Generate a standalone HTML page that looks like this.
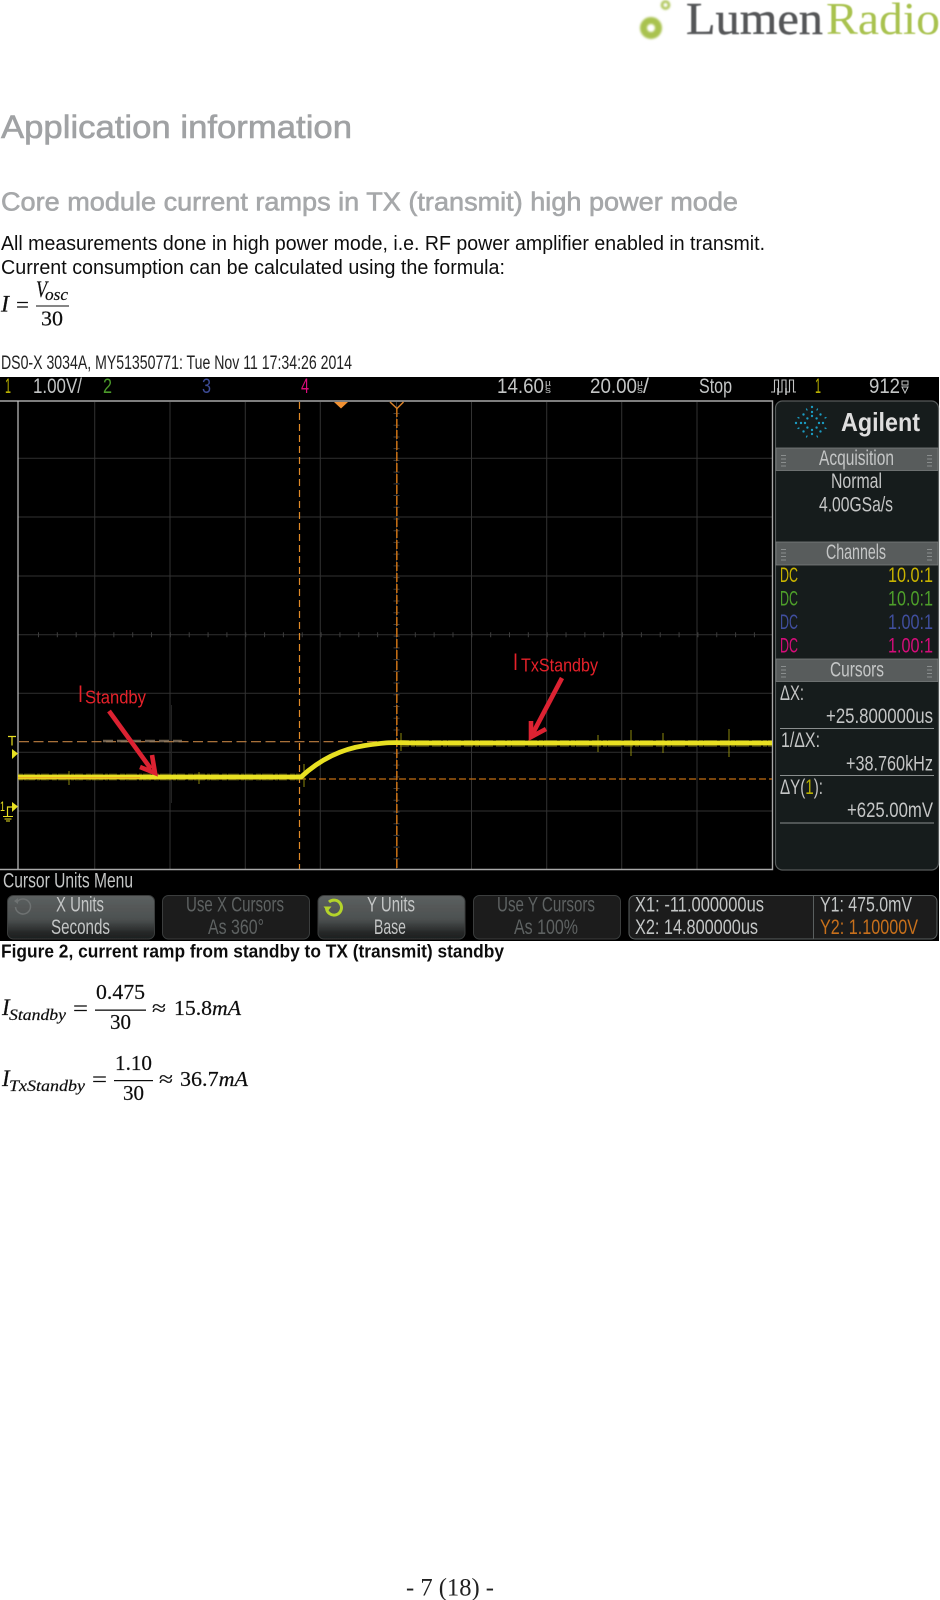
<!DOCTYPE html>
<html lang="en"><head><meta charset="utf-8"><title>Application information</title>
<style>
html,body{margin:0;padding:0;background:#fff;width:940px;height:1600px;overflow:hidden}
svg{display:block}
text{font-family:"Liberation Sans",sans-serif;white-space:pre}
.s{fill:#c4c6c6;font-size:21px}
.d{fill:#5e6262;font-size:21px}
.b{fill:#111;font-size:20px}
.m{font-family:"Liberation Serif",serif;fill:#111;font-size:21px;stroke:#111;stroke-width:.2}
.i{font-style:italic}
</style></head><body>
<svg width="940" height="1600" viewBox="0 0 940 1600" xmlns="http://www.w3.org/2000/svg">
<defs>
<linearGradient id="btn" x1="0" y1="0" x2="0" y2="1"><stop offset="0" stop-color="#5c6060"/><stop offset=".55" stop-color="#4c5050"/><stop offset=".85" stop-color="#262828"/><stop offset="1" stop-color="#1c1e1e"/></linearGradient>
<filter id="all" filterUnits="userSpaceOnUse" x="0" y="0" width="940" height="1600"><feGaussianBlur stdDeviation=".35"/></filter>
<filter id="soft" x="-20%" y="-20%" width="140%" height="140%"><feGaussianBlur stdDeviation=".5"/></filter>
<filter id="softer" x="-30%" y="-30%" width="160%" height="160%"><feGaussianBlur stdDeviation="1"/></filter>
</defs>
<g filter="url(#all)">

<!-- logo -->
<g filter="url(#softer)">
<circle cx="651" cy="28" r="7.500" fill="none" stroke="#a9c24f" stroke-width="7"/>
<circle cx="665.500" cy="5" r="3.500" fill="none" stroke="#a9c24f" stroke-width="2.500"/>
</g>
<g filter="url(#soft)">
<text x="686" y="34" style="font-family:'Liberation Serif',serif;font-size:45px;stroke:#555759;stroke-width:.4" fill="#555759" textLength="137" lengthAdjust="spacingAndGlyphs">Lumen</text>
<text x="826" y="34" style="font-family:'Liberation Serif',serif;font-size:45px" fill="#a9c24f" textLength="114" lengthAdjust="spacingAndGlyphs">Radio</text>
</g>

<!-- headings -->
<text x="1" y="138" style="font-size:32px;stroke:#a0a2a4;stroke-width:.6" fill="#a0a2a4" textLength="351" lengthAdjust="spacingAndGlyphs">Application information</text>
<text x="1" y="210.500" style="font-size:26px;stroke:#a6a8aa;stroke-width:.6" fill="#a6a8aa" textLength="737" lengthAdjust="spacingAndGlyphs">Core module current ramps in TX (transmit) high power mode</text>
<text x="1" y="250" class="b" textLength="764" lengthAdjust="spacingAndGlyphs">All measurements done in high power mode, i.e. RF power amplifier enabled in transmit.</text>
<text x="1" y="274" class="b" textLength="504" lengthAdjust="spacingAndGlyphs">Current consumption can be calculated using the formula:</text>

<!-- formula 1 -->
<text x="1" y="311.500" class="m i" style="font-size:23px" textLength="8" lengthAdjust="spacingAndGlyphs">I</text>
<text x="16" y="311.500" class="m" textLength="13" lengthAdjust="spacingAndGlyphs">=</text>
<text x="36" y="297" class="m i" style="font-size:23px" textLength="11" lengthAdjust="spacingAndGlyphs">V</text>
<text x="45" y="300" class="m i" style="font-size:17px" textLength="23" lengthAdjust="spacingAndGlyphs">osc</text>
<rect x="36" y="305.500" width="33" height="1" fill="#111"/>
<text x="41" y="325.500" class="m" textLength="22" lengthAdjust="spacingAndGlyphs">30</text>

<text x="1" y="369" style="font-size:19px" fill="#222" textLength="351" lengthAdjust="spacingAndGlyphs">DS0-X 3034A, MY51350771: Tue Nov 11 17:34:26 2014</text>

<!-- scope background -->
<rect x="0" y="377" width="939" height="564" fill="#000"/>

<!-- top bar -->
<text x="5" y="393" class="s" style="fill:#b8b000" textLength="6" lengthAdjust="spacingAndGlyphs">1</text>
<text x="33" y="393" class="s" textLength="49" lengthAdjust="spacingAndGlyphs">1.00V/</text>
<text x="103" y="393" class="s" style="fill:#4c9a2a" textLength="9" lengthAdjust="spacingAndGlyphs">2</text>
<text x="202" y="393" class="s" style="fill:#3c4c96" textLength="9" lengthAdjust="spacingAndGlyphs">3</text>
<text x="301" y="393" class="s" style="fill:#d8107a" textLength="8" lengthAdjust="spacingAndGlyphs">4</text>
<text x="497" y="393" class="s" textLength="47" lengthAdjust="spacingAndGlyphs">14.60</text>
<text x="545" y="386" class="s" style="font-size:9px" textLength="6" lengthAdjust="spacingAndGlyphs">µ</text>
<text x="545" y="393" class="s" style="font-size:9px" textLength="6" lengthAdjust="spacingAndGlyphs">s</text>
<text x="590" y="393" class="s" textLength="47" lengthAdjust="spacingAndGlyphs">20.00</text>
<text x="637" y="386" class="s" style="font-size:9px" textLength="6" lengthAdjust="spacingAndGlyphs">µ</text>
<text x="637" y="393" class="s" style="font-size:9px" textLength="6" lengthAdjust="spacingAndGlyphs">s</text>
<text x="643" y="393" class="s" textLength="6" lengthAdjust="spacingAndGlyphs">/</text>
<text x="699" y="393" class="s" textLength="33" lengthAdjust="spacingAndGlyphs">Stop</text>
<path d="M771 392h3.500v-12h4v12h3.500v-12h4v12h3.500v-12h4v12h2.500" fill="none" stroke="#c4c6c6" stroke-width="1.100"/>
<path d="M778 388v7M786 388v7" stroke="#c4c6c6" stroke-width="1.500"/>
<text x="815" y="393" class="s" style="fill:#b8b000" textLength="6" lengthAdjust="spacingAndGlyphs">1</text>
<text x="869" y="393" class="s" textLength="31" lengthAdjust="spacingAndGlyphs">912</text>
<path d="M902 387l3 6 3-6zM902 381h6v4h-6z" fill="none" stroke="#c4c6c6" stroke-width="1"/>

<!-- grid -->
<g stroke="#333" stroke-width="1">
<path d="M94.700 402V869M170 402V869M245.300 402V869M320.300 402V869M396.500 402V869M471.500 402V869M546.700 402V869M621.700 402V869M697 402V869"/>
<path d="M18 458.300H772M18 517H772M18 576H772M18 634.700H772M18 693.300H772M18 752.300H772M18 811H772"/>
</g>
<line x1="38" y1="634.700" x2="772" y2="634.700" stroke="#3c3c3c" stroke-width="5" stroke-dasharray="1 17.840"/>
<line x1="396.500" y1="413" x2="396.500" y2="869" stroke="#3c3c3c" stroke-width="6" stroke-dasharray="1 10.720"/>
<path d="M171.500 705V803" stroke="#222" stroke-width="1"/>

<!-- frame -->
<path d="M0 401H772.500V869.500H0" fill="none" stroke="#a8a8a8" stroke-width="1.400"/>
<path d="M18 401V869" stroke="#c4c4c4" stroke-width="1.200"/>

<!-- cursors -->
<g stroke="#c06c18" fill="none" stroke-width="1.200">
<line x1="299.500" y1="402" x2="299.500" y2="869" stroke="#e08a28" stroke-dasharray="7 4"/>
<line x1="396.800" y1="408" x2="396.800" y2="869" stroke-width="1.600" stroke-dasharray="9 2"/>
<line x1="19" y1="741.700" x2="772" y2="741.700" stroke="#c08040" stroke-dasharray="10 4.500"/>
<line x1="19" y1="779" x2="772" y2="779" stroke-dasharray="7 3"/>
</g>
<path d="M103 741H182" stroke="#8c7a64" stroke-width="2.500" stroke-dasharray="10 4" opacity=".8"/>
<path d="M334 402H348L341 408.500Z" fill="#f09030"/>
<path d="M390 402L397 408.500L403.500 402" fill="none" stroke="#d88028" stroke-width="1.500"/>

<!-- trace -->
<g stroke="#8c8810" stroke-width="1">
<path d="M69 771V785M199 772V784M304 764V787M401 733V751M598 735V752M631 730V756M663 733V753M729 729V757"/>
</g>
<path d="M18 777H300" stroke="#8c8a14" stroke-width="7" stroke-dasharray="5 1 11 2 3 1 8 3" opacity=".45"/>
<path d="M400 743.500H772" stroke="#8c8a14" stroke-width="7" stroke-dasharray="9 2 4 1 13 3" opacity=".45"/>
<path d="M18 777H301C315 764 335 750 365 745.500S395 743 420 743H772" fill="none" stroke="#e8e020" stroke-width="4.800"/>
<path d="M18 777.800H140" stroke="#f0a020" stroke-width="1"/>

<!-- annotations -->
<text x="78" y="702" style="font-size:24px" fill="#e6202a" textLength="5" lengthAdjust="spacingAndGlyphs">I</text>
<text x="85" y="703.500" style="font-size:18px" fill="#e6202a" textLength="61" lengthAdjust="spacingAndGlyphs">Standby</text>
<path d="M109 711L151 769" stroke="#dc2430" stroke-width="4.600" fill="none"/>
<path d="M152 755L155 773L140 767" fill="none" stroke="#dc2430" stroke-width="4.600"/>
<text x="513" y="670" style="font-size:24px" fill="#e6202a" textLength="5" lengthAdjust="spacingAndGlyphs">I</text>
<text x="521" y="671.500" style="font-size:18px" fill="#e6202a" textLength="77" lengthAdjust="spacingAndGlyphs">TxStandby</text>
<path d="M562 678L533 733" stroke="#dc2430" stroke-width="4.600" fill="none"/>
<path d="M531 721L531 737L546 729" fill="none" stroke="#dc2430" stroke-width="4.600"/>

<!-- trigger / ground markers -->
<path d="M8 736.500h8M12 736.500v9" stroke="#e8e020" stroke-width="1.200" fill="none"/>
<path d="M12 749L18 753.500L12 759Z" fill="#e8e020"/>
<text x="0" y="811" style="font-size:14px" fill="#e8e020" textLength="5" lengthAdjust="spacingAndGlyphs">1</text>
<path d="M7.500 816V807H13" stroke="#e8e020" stroke-width="1.200" fill="none"/>
<path d="M12 802L18 806.500L12 812Z" fill="#e8e020"/>
<path d="M3 816.500H13M4.500 819H11.500M6 821H10" stroke="#e8e020" stroke-width="1"/>

<!-- right panel -->
<rect x="775.500" y="401" width="163" height="469" rx="7" fill="#181a1a" stroke="#555a5a" stroke-width="1.200"/>
<g transform="translate(812 423)" stroke="#1a9cc2" stroke-linecap="round" fill="none">
<g stroke-width="2.400"><path d="M-16 0H16" stroke-dasharray="0 5 0 4 0 14 0 4 0 5"/><path d="M0 -16V16" stroke-dasharray="0 5 0 4 0 14 0 4 0 5"/><path d="M-8.500 -8.500L8.500 8.500" stroke-dasharray="0 5.500 0 13 0 5.500"/><path d="M8.500 -8.500L-8.500 8.500" stroke-dasharray="0 5.500 0 13 0 5.500"/></g>
<path d="M-14 -5.500L-13 -5M14 5.500L13 5M14 -5.500L13 -5M-14 5.500L-13 5M-5.500 -14L-5 -13M5.500 14L5 13M5.500 -14L5 -13M-5.500 14L-5 13" stroke-width="1.300"/>
</g>
<text x="841" y="431" style="font-size:26px;font-weight:bold" fill="#dedede" textLength="79" lengthAdjust="spacingAndGlyphs">Agilent</text>

<g fill="#585c5c" stroke="#7a7e7e" stroke-width=".8">
<rect x="776" y="448" width="162" height="22.500"/>
<rect x="776" y="542" width="162" height="23"/>
<rect x="776" y="659" width="162" height="22.500"/>
</g>
<g fill="none" stroke="#8a8e8e" stroke-dasharray="1 2.500">
<path d="M783.500 455V468M929.500 455V468M783.500 549V562M929.500 549V562M783.500 666V679M929.500 666V679" stroke-width="5"/>
</g>
<text x="819" y="465" class="s" textLength="75" lengthAdjust="spacingAndGlyphs">Acquisition</text>
<text x="831" y="488" class="s" textLength="51" lengthAdjust="spacingAndGlyphs">Normal</text>
<text x="819" y="511.500" class="s" textLength="74" lengthAdjust="spacingAndGlyphs">4.00GSa/s</text>
<text x="826" y="559" class="s" textLength="60" lengthAdjust="spacingAndGlyphs">Channels</text>
<text x="780" y="582" style="font-size:21px" fill="#c8b400" textLength="18" lengthAdjust="spacingAndGlyphs">DC</text>
<text x="888" y="582" style="font-size:21px" fill="#c8b400" textLength="45" lengthAdjust="spacingAndGlyphs">10.0:1</text>
<text x="780" y="605.500" style="font-size:21px" fill="#4ea02c" textLength="18" lengthAdjust="spacingAndGlyphs">DC</text>
<text x="888" y="605.500" style="font-size:21px" fill="#4ea02c" textLength="45" lengthAdjust="spacingAndGlyphs">10.0:1</text>
<text x="780" y="629" style="font-size:21px" fill="#3f4f9e" textLength="18" lengthAdjust="spacingAndGlyphs">DC</text>
<text x="888" y="629" style="font-size:21px" fill="#3f4f9e" textLength="45" lengthAdjust="spacingAndGlyphs">1.00:1</text>
<text x="780" y="652.500" style="font-size:21px" fill="#d4107a" textLength="18" lengthAdjust="spacingAndGlyphs">DC</text>
<text x="888" y="652.500" style="font-size:21px" fill="#d4107a" textLength="45" lengthAdjust="spacingAndGlyphs">1.00:1</text>
<text x="830" y="676.500" class="s" textLength="54" lengthAdjust="spacingAndGlyphs">Cursors</text>
<text x="780" y="700" class="s" textLength="24" lengthAdjust="spacingAndGlyphs">ΔX:</text>
<text x="826" y="723" class="s" textLength="107" lengthAdjust="spacingAndGlyphs">+25.800000us</text>
<rect x="780" y="728" width="154" height="1" fill="#8a8e8e"/>
<text x="781" y="747" class="s" textLength="39" lengthAdjust="spacingAndGlyphs">1/ΔX:</text>
<text x="846" y="770.500" class="s" textLength="87" lengthAdjust="spacingAndGlyphs">+38.760kHz</text>
<rect x="780" y="775" width="154" height="1" fill="#8a8e8e"/>
<text x="780" y="794" class="s" textLength="43" lengthAdjust="spacingAndGlyphs">ΔY(<tspan fill="#b8b000">1</tspan>):</text>
<text x="847" y="817" class="s" textLength="86" lengthAdjust="spacingAndGlyphs">+625.00mV</text>
<rect x="780" y="822.500" width="154" height="1" fill="#8a8e8e"/>

<!-- bottom menu -->
<text x="3" y="887.500" class="s" textLength="130" lengthAdjust="spacingAndGlyphs">Cursor Units Menu</text>
<rect x="7.500" y="895.500" width="147" height="43.500" rx="6" fill="url(#btn)" stroke="#3a3e3e"/>
<rect x="162.500" y="895.500" width="147" height="43.500" rx="6" fill="#1a1c1c" stroke="#3a3e3e"/>
<rect x="318" y="895.500" width="147" height="43.500" rx="6" fill="url(#btn)" stroke="#3a3e3e"/>
<rect x="473.500" y="895.500" width="147" height="43.500" rx="6" fill="#1a1c1c" stroke="#3a3e3e"/>
<rect x="629" y="895.500" width="308" height="43.500" rx="6" fill="#1a1c1c" stroke="#5a5e5e"/>
<rect x="813" y="896" width="1" height="43" fill="#5a5e5e"/>

<path d="M17 902a7.500 7.500 0 1 1-1.500 5" fill="none" stroke="#6e7272" stroke-width="1.500"/>
<path d="M14 901l4-3v6z" fill="#6e7272"/>
<path d="M329 902a7.500 7.500 0 1 1-2.500 6" fill="none" stroke="#b4d42c" stroke-width="3"/>
<path d="M323.500 906.500h8l-4 5z" fill="#b4d42c"/>

<text x="56" y="911.500" class="s" textLength="48" lengthAdjust="spacingAndGlyphs">X Units</text>
<text x="51" y="934" class="s" textLength="59" lengthAdjust="spacingAndGlyphs">Seconds</text>
<text x="186" y="911.500" class="d" textLength="98" lengthAdjust="spacingAndGlyphs">Use X Cursors</text>
<text x="208" y="934" class="d" textLength="56" lengthAdjust="spacingAndGlyphs">As 360°</text>
<text x="367" y="911.500" class="s" textLength="48" lengthAdjust="spacingAndGlyphs">Y Units</text>
<text x="374" y="934" class="s" textLength="32" lengthAdjust="spacingAndGlyphs">Base</text>
<text x="497" y="911.500" class="d" textLength="98" lengthAdjust="spacingAndGlyphs">Use Y Cursors</text>
<text x="514" y="934" class="d" textLength="64" lengthAdjust="spacingAndGlyphs">As 100%</text>
<text x="635" y="911.500" class="s" textLength="129" lengthAdjust="spacingAndGlyphs">X1: -11.000000us</text>
<text x="635" y="934" class="s" textLength="123" lengthAdjust="spacingAndGlyphs">X2: 14.800000us</text>
<text x="820" y="911.500" class="s" textLength="92" lengthAdjust="spacingAndGlyphs">Y1: 475.0mV</text>
<text x="820" y="934" class="s" style="fill:#c8701a" textLength="98" lengthAdjust="spacingAndGlyphs">Y2: 1.10000V</text>

<!-- caption -->
<text x="1" y="957.300" style="font-size:18px;font-weight:bold" fill="#111" textLength="503" lengthAdjust="spacingAndGlyphs">Figure 2, current ramp from standby to TX (transmit) standby</text>

<!-- equation 1 -->
<text x="2" y="1015" class="m i" style="font-size:23px">I</text>
<text x="9" y="1020" class="m i" style="font-size:16px" textLength="57" lengthAdjust="spacingAndGlyphs">Standby</text>
<text x="73" y="1015" class="m" textLength="15" lengthAdjust="spacingAndGlyphs">=</text>
<text x="96" y="999" class="m" textLength="49" lengthAdjust="spacingAndGlyphs">0.475</text>
<rect x="95" y="1009.500" width="51" height="1.300" fill="#111"/>
<text x="110" y="1029" class="m" textLength="21" lengthAdjust="spacingAndGlyphs">30</text>
<text x="152" y="1015" class="m" textLength="14" lengthAdjust="spacingAndGlyphs">≈</text>
<text x="174" y="1015" class="m" textLength="67" lengthAdjust="spacingAndGlyphs">15.8<tspan class="i">mA</tspan></text>

<!-- equation 2 -->
<text x="2" y="1086" class="m i" style="font-size:23px">I</text>
<text x="9" y="1091" class="m i" style="font-size:16px" textLength="76" lengthAdjust="spacingAndGlyphs">TxStandby</text>
<text x="92" y="1086" class="m" textLength="15" lengthAdjust="spacingAndGlyphs">=</text>
<text x="115" y="1070" class="m" textLength="37" lengthAdjust="spacingAndGlyphs">1.10</text>
<rect x="114" y="1080" width="39" height="1.200" fill="#111"/>
<text x="123" y="1100" class="m" textLength="21" lengthAdjust="spacingAndGlyphs">30</text>
<text x="159" y="1086" class="m" textLength="14" lengthAdjust="spacingAndGlyphs">≈</text>
<text x="180" y="1086" class="m" textLength="68" lengthAdjust="spacingAndGlyphs">36.7<tspan class="i">mA</tspan></text>

<!-- footer -->
<text x="406" y="1595.500" style="font-family:'Liberation Serif',serif;font-size:25px" fill="#222" textLength="88" lengthAdjust="spacingAndGlyphs">- 7 (18) -</text>
</g>
</svg>
</body></html>
